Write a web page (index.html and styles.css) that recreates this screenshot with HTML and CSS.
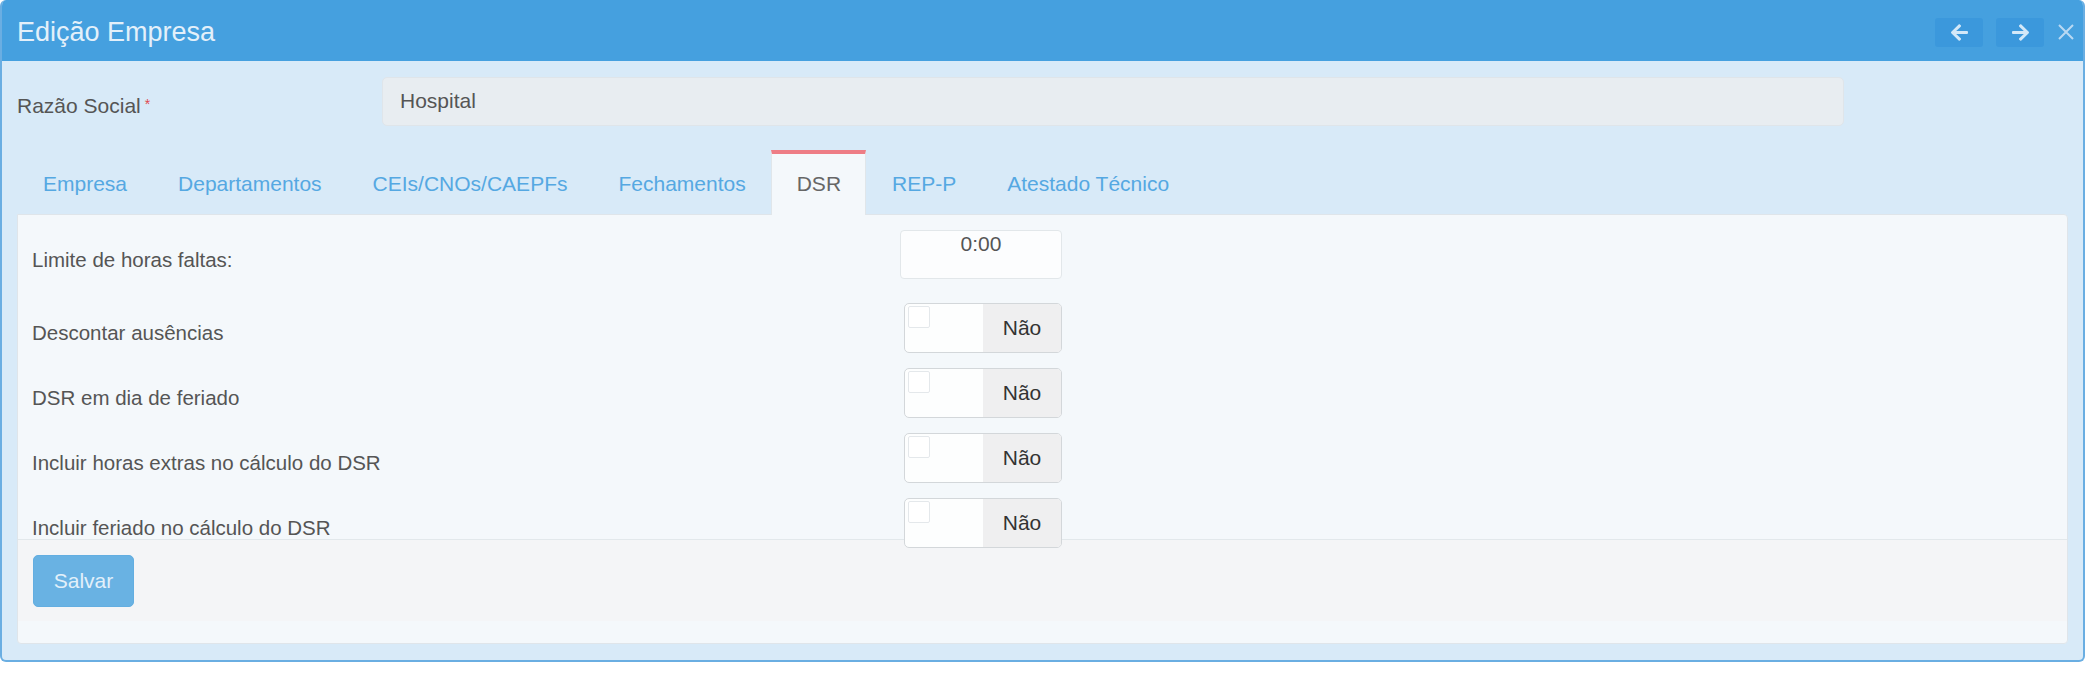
FILE: index.html
```html
<html>
<head>
<meta charset="utf-8">
<title>Edição Empresa</title>
<link rel="stylesheet" href="styles.css">
</head>
<body>
<div class="modal">
    <div class="modal-header">
        <h1 class="modal-title">Edição Empresa</h1>
        <div class="header-actions">
            <button class="nav-btn" title="Anterior">
                <svg width="17" height="17" viewBox="0 37 448 438"><path fill="#d3e8f8" d="M257.5 445.1l-22.2 22.2c-9.4 9.4-24.6 9.4-33.9 0L7 273c-9.4-9.4-9.4-24.6 0-33.9L201.4 44.7c9.4-9.4 24.6-9.4 33.9 0l22.2 22.2c9.5 9.5 9.3 25-.4 34.3L136.6 216H424c13.3 0 24 10.7 24 24v32c0 13.3-10.7 24-24 24H136.6l120.5 114.8c9.8 9.3 10 24.8.4 34.3z"/></svg>
            </button>
            <button class="nav-btn" title="Próximo">
                <svg width="17" height="17" viewBox="0 37 448 438"><path fill="#d3e8f8" d="M190.5 66.9l22.2-22.2c9.4-9.4 24.6-9.4 33.9 0L441 239c9.4 9.4 9.4 24.6 0 33.9L246.6 467.3c-9.4 9.4-24.6 9.4-33.9 0l-22.2-22.2c-9.5-9.5-9.3-25 .4-34.3L311.4 296H24c-13.3 0-24-10.7-24-24v-32c0-13.3 10.7-24 24-24h287.4L190.9 101.2c-9.8-9.3-10-24.8-.4-34.3z"/></svg>
            </button>
            <button class="close-btn" title="Fechar">
                <svg width="16" height="16" viewBox="0 0 16 16"><path d="M1 1L15 15M15 1L1 15" stroke="#b9d9f3" stroke-width="2"/></svg>
            </button>
        </div>
    </div>

    <div class="modal-body">
        <div class="field-row">
            <label class="field-label">Razão Social<span class="required">*</span></label>
            <div class="field-input">Hospital</div>
        </div>

        <ul class="tabs">
            <li>Empresa</li>
            <li>Departamentos</li>
            <li>CEIs/CNOs/CAEPFs</li>
            <li>Fechamentos</li>
            <li class="active">DSR</li>
            <li>REP-P</li>
            <li>Atestado Técnico</li>
        </ul>

        <div class="tab-panel">
            <div class="form-body">
                <div class="form-row first">
                    <span class="form-label">Limite de horas faltas:</span>
                    <div class="time-input">0:00</div>
                </div>
                <div class="form-row">
                    <span class="form-label">Descontar ausências</span>
                    <div class="switch"><span class="switch-off"><span class="check"></span></span><span class="switch-state">Não</span></div>
                </div>
                <div class="form-row">
                    <span class="form-label">DSR em dia de feriado</span>
                    <div class="switch"><span class="switch-off"><span class="check"></span></span><span class="switch-state">Não</span></div>
                </div>
                <div class="form-row">
                    <span class="form-label">Incluir horas extras no cálculo do DSR</span>
                    <div class="switch"><span class="switch-off"><span class="check"></span></span><span class="switch-state">Não</span></div>
                </div>
                <div class="form-row">
                    <span class="form-label">Incluir feriado no cálculo do DSR</span>
                    <div class="switch"><span class="switch-off"><span class="check"></span></span><span class="switch-state">Não</span></div>
                </div>
            </div>
            <div class="form-footer">
                <button class="btn-save">Salvar</button>
            </div>
        </div>
    </div>
</div>
</body>
</html>
```

FILE: styles.css
```css
*{box-sizing:border-box;}
body{margin:0;background:#fff;font-family:"Liberation Sans",Helvetica,Arial,sans-serif;color:#555;}
ul,li,h1{margin:0;padding:0;}
ul{list-style-type:none;}

.modal{border:2px solid #6aaee2;border-top:0;border-radius:6px;background:#d8eaf8;overflow:hidden;}
.modal-header{height:61px;background:#45a0df;display:flex;align-items:center;justify-content:space-between;padding:0 9px 0 15px;}
.modal-title{font-size:27px;font-weight:400;color:#e3f0fa;padding-top:4px;}
.header-actions{display:flex;align-items:center;gap:13px;margin-top:3px;}
.nav-btn{width:48px;height:29px;border:0;border-radius:3px;background:#3b98dc;display:flex;align-items:center;justify-content:center;padding:0;cursor:pointer;}
.close-btn{width:16px;height:16px;border:0;background:none;padding:0;margin-left:1px;display:flex;cursor:pointer;}

.modal-body{padding:16px 15px 16px;}
.field-row{display:flex;align-items:center;}
.field-label{width:365px;font-size:21px;color:#555;padding-top:8px;}
.required{color:#e0484f;font-size:14px;vertical-align:top;margin-left:4px;position:relative;top:2px;}
.field-input{width:1462px;height:49px;background:#e8edf1;border:1px solid #dfe5ea;border-radius:5px;padding:0 17px;font-size:21px;line-height:45px;color:#555;}

.tabs{display:flex;margin:24px 0 -1px;}
.tabs li{height:65px;padding:0 24px 0 25px;border:1px solid transparent;border-top:4px solid transparent;border-bottom:0;line-height:60px;font-size:21px;color:#55a8e2;cursor:pointer;}
.tabs li.active{background:#f4f8fb;border-color:#e0e6ea;border-top-color:#ee7d85;color:#666;position:relative;z-index:1;}

.tab-panel{background:#f4f8fb;border:1px solid #dfe5ea;border-radius:0 4px 4px 4px;padding-bottom:22px;}
.form-body{height:324px;padding:15px 14px 0;}
.form-row{display:grid;grid-template-columns:868px 162px;align-items:center;justify-items:start;margin-bottom:15px;}
.form-row.first{margin-bottom:24px;}
.form-label{font-size:20.5px;color:#555;padding-top:10px;}
.time-input{width:162px;height:49px;background:#fcfdfe;border:1px solid #e2e7ea;border-radius:4px;text-align:center;font-size:21px;line-height:25px;color:#555;}

.switch{justify-self:end;width:158px;height:50px;border:1px solid #d3d7da;border-radius:5px;background:#fdfefe;display:flex;overflow:hidden;position:relative;z-index:1;}
.switch-off{flex:1;padding:2px 3px;}
.check{display:block;width:22px;height:22px;border:1px solid #e4e8eb;border-radius:2px;background:#fff;}
.switch-state{width:78px;background:#efeff0;display:flex;align-items:center;justify-content:center;font-size:21px;color:#333;}

.form-footer{background:#f4f5f7;border-top:1px solid #e2e8eb;padding:15px 15px 14px;}
.btn-save{width:101px;height:52px;background:#69b2e3;border:1px solid #63aee1;border-radius:5px;color:#e2f0fa;font-size:21px;font-family:inherit;cursor:pointer;}
```
